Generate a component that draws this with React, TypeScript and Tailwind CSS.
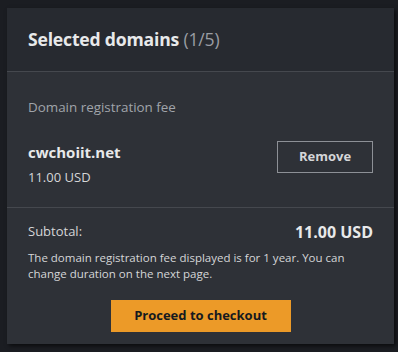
export default function App() {
  return (
    <div
      className="w-[398px] h-[352px] bg-[#1b1d22] pt-2 pl-[7px] pr-1"
      style={{ fontFamily: '"Open Sans", "Noto Sans", sans-serif' }}
    >
      <div className="w-[387px] bg-[#2e3137] shadow-[2px_2px_4px_rgba(0,0,0,0.6)]">
        <div className="h-16 bg-[#272a30] border-b border-[#45484e] flex items-center px-[21px]">
          <h2 className="text-[17.6px] font-bold text-[#e8e9ea] tracking-[-0.2px]">
            Selected domains <span className="font-normal text-[#9a9da3]">(1/5)</span>
          </h2>
        </div>

        <div className="px-[21px] pt-[25px] pb-[19px] border-b border-[#45484e]">
          <div className="text-[13.4px] text-[#a0a4aa]">Domain registration fee</div>
          <div className="flex items-start justify-between mt-[22px]">
            <div className="pt-[3px]">
              <div className="text-[15px] font-bold text-[#e8e9ea] leading-5">cwchoiit.net</div>
              <div className="text-[13px] text-[#d5d6d8] mt-[6px]">11.00 USD</div>
            </div>
            <button className="mt-[2px] w-24 h-8 border border-[#8d9096] text-[13px] font-bold text-[#d5d6d8]">
              Remove
            </button>
          </div>
        </div>

        <div className="px-[21px] pt-[12px] pb-[12px]">
          <div className="flex items-center justify-between">
            <span className="text-[13px] text-[#d5d6d8]">Subtotal:</span>
            <span className="text-[16px] font-bold text-[#e8e9ea]">11.00 USD</span>
          </div>
          <p className="text-[11.5px] leading-4 text-[#d5d6d8] mt-[6px]">
            The domain registration fee displayed is for 1 year. You can change duration on the next page.
          </p>
          <div className="flex justify-center mt-[18px]">
            <button className="w-[180px] h-8 bg-[#ec9a28] text-[13px] font-bold text-[#16191f]">
              Proceed to checkout
            </button>
          </div>
        </div>
      </div>
    </div>
  );
}
